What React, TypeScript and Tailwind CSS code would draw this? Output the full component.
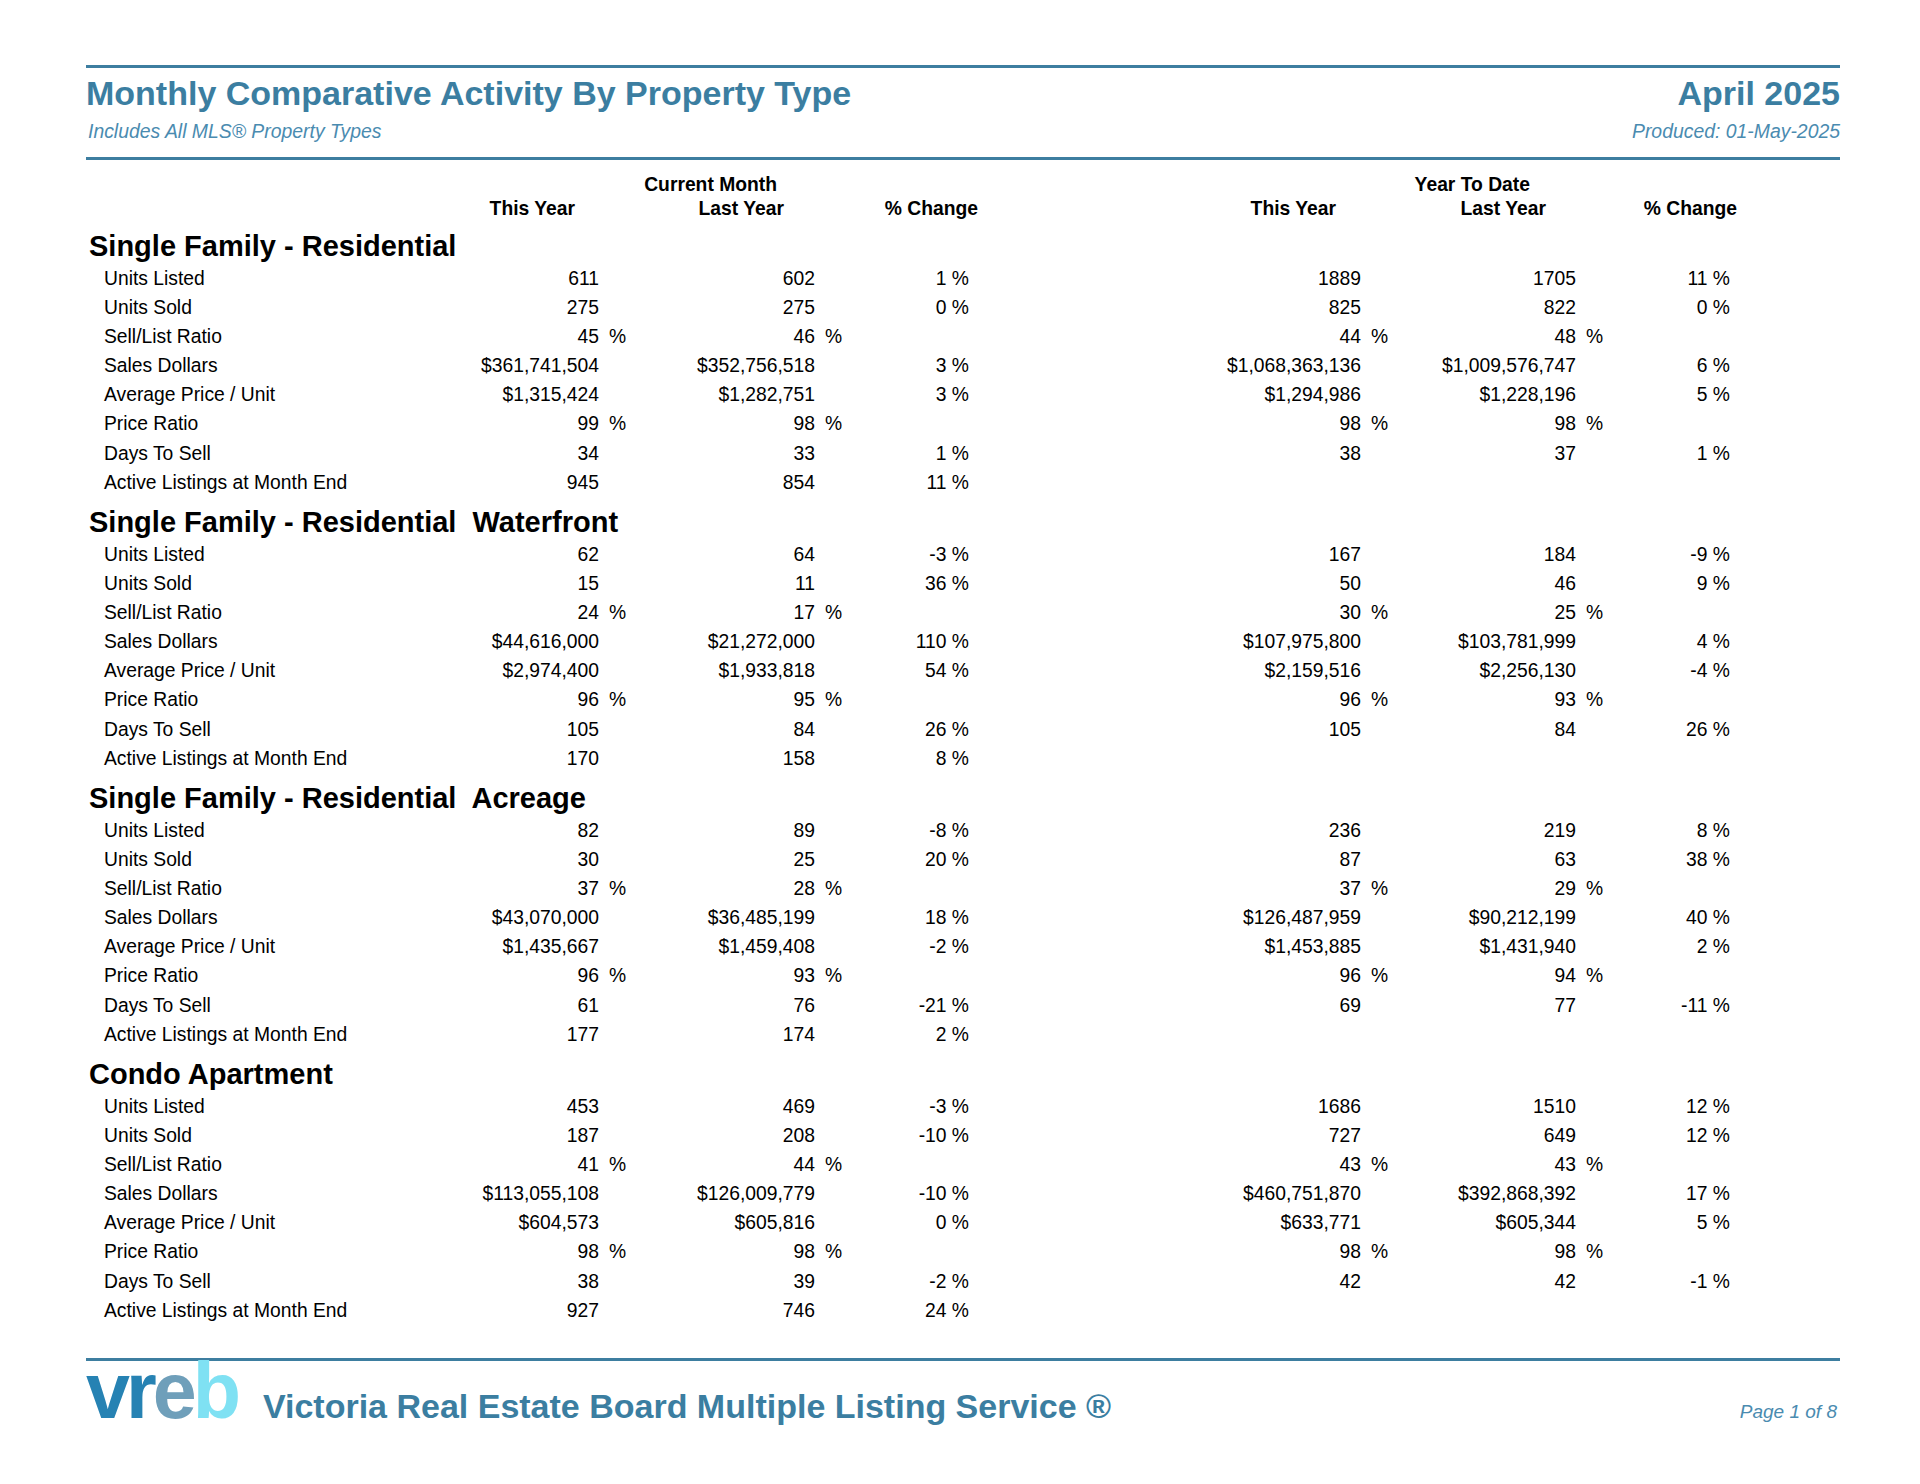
type Val = string;

type Row = {
  label: string;
  cm: [Val, Val, Val];
  ytd?: [Val, Val, Val];
  ratio?: boolean;
};

type Section = { title: string; rows: Row[] };

const SECTIONS: Section[] = [
  {
    title: "Single Family - Residential",
    rows: [
      { label: "Units Listed", cm: ["611", "602", "1 %"], ytd: ["1889", "1705", "11 %"] },
      { label: "Units Sold", cm: ["275", "275", "0 %"], ytd: ["825", "822", "0 %"] },
      { label: "Sell/List Ratio", cm: ["45", "46", ""], ytd: ["44", "48", ""], ratio: true },
      { label: "Sales Dollars", cm: ["$361,741,504", "$352,756,518", "3 %"], ytd: ["$1,068,363,136", "$1,009,576,747", "6 %"] },
      { label: "Average Price / Unit", cm: ["$1,315,424", "$1,282,751", "3 %"], ytd: ["$1,294,986", "$1,228,196", "5 %"] },
      { label: "Price Ratio", cm: ["99", "98", ""], ytd: ["98", "98", ""], ratio: true },
      { label: "Days To Sell", cm: ["34", "33", "1 %"], ytd: ["38", "37", "1 %"] },
      { label: "Active Listings at Month End", cm: ["945", "854", "11 %"] },
    ],
  },
  {
    title: "Single Family - Residential  Waterfront",
    rows: [
      { label: "Units Listed", cm: ["62", "64", "-3 %"], ytd: ["167", "184", "-9 %"] },
      { label: "Units Sold", cm: ["15", "11", "36 %"], ytd: ["50", "46", "9 %"] },
      { label: "Sell/List Ratio", cm: ["24", "17", ""], ytd: ["30", "25", ""], ratio: true },
      { label: "Sales Dollars", cm: ["$44,616,000", "$21,272,000", "110 %"], ytd: ["$107,975,800", "$103,781,999", "4 %"] },
      { label: "Average Price / Unit", cm: ["$2,974,400", "$1,933,818", "54 %"], ytd: ["$2,159,516", "$2,256,130", "-4 %"] },
      { label: "Price Ratio", cm: ["96", "95", ""], ytd: ["96", "93", ""], ratio: true },
      { label: "Days To Sell", cm: ["105", "84", "26 %"], ytd: ["105", "84", "26 %"] },
      { label: "Active Listings at Month End", cm: ["170", "158", "8 %"] },
    ],
  },
  {
    title: "Single Family - Residential  Acreage",
    rows: [
      { label: "Units Listed", cm: ["82", "89", "-8 %"], ytd: ["236", "219", "8 %"] },
      { label: "Units Sold", cm: ["30", "25", "20 %"], ytd: ["87", "63", "38 %"] },
      { label: "Sell/List Ratio", cm: ["37", "28", ""], ytd: ["37", "29", ""], ratio: true },
      { label: "Sales Dollars", cm: ["$43,070,000", "$36,485,199", "18 %"], ytd: ["$126,487,959", "$90,212,199", "40 %"] },
      { label: "Average Price / Unit", cm: ["$1,435,667", "$1,459,408", "-2 %"], ytd: ["$1,453,885", "$1,431,940", "2 %"] },
      { label: "Price Ratio", cm: ["96", "93", ""], ytd: ["96", "94", ""], ratio: true },
      { label: "Days To Sell", cm: ["61", "76", "-21 %"], ytd: ["69", "77", "-11 %"] },
      { label: "Active Listings at Month End", cm: ["177", "174", "2 %"] },
    ],
  },
  {
    title: "Condo Apartment",
    rows: [
      { label: "Units Listed", cm: ["453", "469", "-3 %"], ytd: ["1686", "1510", "12 %"] },
      { label: "Units Sold", cm: ["187", "208", "-10 %"], ytd: ["727", "649", "12 %"] },
      { label: "Sell/List Ratio", cm: ["41", "44", ""], ytd: ["43", "43", ""], ratio: true },
      { label: "Sales Dollars", cm: ["$113,055,108", "$126,009,779", "-10 %"], ytd: ["$460,751,870", "$392,868,392", "17 %"] },
      { label: "Average Price / Unit", cm: ["$604,573", "$605,816", "0 %"], ytd: ["$633,771", "$605,344", "5 %"] },
      { label: "Price Ratio", cm: ["98", "98", ""], ytd: ["98", "98", ""], ratio: true },
      { label: "Days To Sell", cm: ["38", "39", "-2 %"], ytd: ["42", "42", "-1 %"] },
      { label: "Active Listings at Month End", cm: ["927", "746", "24 %"] },
    ],
  },
];

// label | cm this | cm last | cm % | ytd this | ytd last | ytd %
const GRID = "grid grid-cols-[313px_200px_216px_154px_392px_215px_154px]";

// ratio values: number keeps the column edge, the "%" hangs past it
function Num({ v, ratio }: { v: Val; ratio?: boolean }) {
  return (
    <div className="text-right whitespace-nowrap">
      {v}
      {ratio && v && (
        <span className="inline-block w-0 whitespace-nowrap">
          <span className="ml-[10px]">%</span>
        </span>
      )}
    </div>
  );
}

function DataRow({ row }: { row: Row }) {
  const ytd = row.ytd ?? ["", "", ""];
  return (
    <div className={`${GRID} h-[29.2px] leading-[29.2px] text-[19.3px] text-black`}>
      <div className="pl-[18px] whitespace-nowrap">{row.label}</div>
      <Num v={row.cm[0]} ratio={row.ratio} />
      <Num v={row.cm[1]} ratio={row.ratio} />
      <Num v={row.cm[2]} />
      <Num v={ytd[0]} ratio={row.ratio} />
      <Num v={ytd[1]} ratio={row.ratio} />
      <Num v={ytd[2]} />
    </div>
  );
}

function VrebLogo() {
  return (
    <div className="text-[79px] font-bold leading-[60px] tracking-[-4px] whitespace-nowrap">
      <span className="text-[#2682b3]">v</span>
      <span className="text-[#2682b3]">r</span>
      <span className="text-[#6f9fba]">e</span>
      <span className="text-[#7fe1f3]">b</span>
    </div>
  );
}

export default function App() {
  return (
    <div className="min-h-[1484px] w-[1920px] bg-white font-['Liberation_Sans',Arial,sans-serif]">
      <div className="ml-[86px] w-[1754px] pt-[65px]">
        {/* Header */}
        <div className="h-[3px] bg-[#3d7ea0]" />
        <div className="mt-[5px] flex h-[40px] items-center justify-between text-[34px] font-bold leading-[40px] text-[#3b7ea1]">
          <span>Monthly Comparative Activity By Property Type</span>
          <span>April 2025</span>
        </div>
        <div className="mt-[6px] flex h-[24px] justify-between text-[19.4px] italic leading-[24px] text-[#4a8bb0]">
          <span className="pl-[2px]">Includes All MLS® Property Types</span>
          <span>Produced: 01-May-2025</span>
        </div>
        <div className="mt-[14px] h-[3px] bg-[#3d7ea0]" />

        {/* Column headers */}
        <div className="mt-[13px] text-[19.3px] font-bold leading-[24px] text-black">
          <div className={GRID}>
            <div className="col-start-2 col-span-2 pr-[38px] text-right">Current Month</div>
            <div className="col-start-5 col-span-2 pr-[46px] text-right">Year To Date</div>
          </div>
          <div className={GRID}>
            <div />
            <div className="pr-[24px] text-right">This Year</div>
            <div className="pr-[31px] text-right">Last Year</div>
            <div className="-mr-[9px] text-right">% Change</div>
            <div className="pr-[25px] text-right">This Year</div>
            <div className="pr-[30px] text-right">Last Year</div>
            <div className="-mr-[7px] text-right">% Change</div>
          </div>
        </div>

        {/* Sections */}
        {SECTIONS.map((s) => (
          <div key={s.title} className="pt-[9px]">
            <div className="h-[33.5px] whitespace-pre pl-[3px] text-[29px] font-bold leading-[33.5px] text-black">
              {s.title}
            </div>
            {s.rows.map((r) => (
              <DataRow key={r.label} row={r} />
            ))}
          </div>
        ))}

        {/* Footer */}
        <div className="mt-[33px] h-[3px] bg-[#3d7ea0]" />
        <div className="flex items-baseline">
          <VrebLogo />
          <span className="ml-[26px] text-[34px] font-bold text-[#3b7ea1]">
            Victoria Real Estate Board Multiple Listing Service ®
          </span>
          <span className="ml-auto pr-[3px] text-[19px] italic text-[#4a8bb0]">Page 1 of 8</span>
        </div>
      </div>
    </div>
  );
}
